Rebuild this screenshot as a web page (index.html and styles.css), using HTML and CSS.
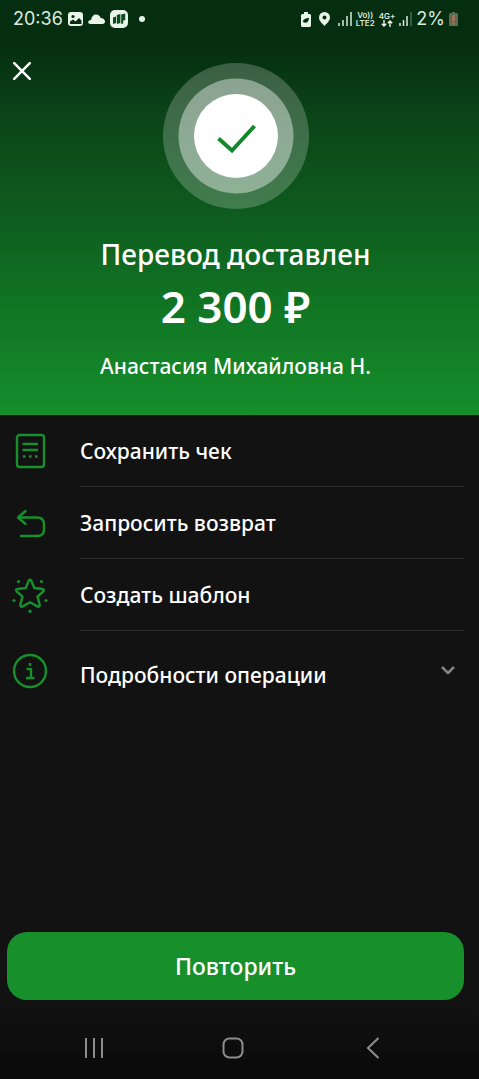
FILE: index.html
```html
<!DOCTYPE html>
<html lang="ru">
<head>
<meta charset="utf-8">
<meta name="viewport" content="width=device-width, initial-scale=1">
<title>Перевод доставлен</title>
<link rel="stylesheet" href="styles.css">
</head>
<body>
<div class="screen">
  <header class="hero">
    <div class="status">
      <div class="status-left">
        <span class="clock">20:36</span>
        <svg width="15" height="15" viewBox="0 0 15 15"><rect width="15" height="14" rx="3" fill="#eaf5ea"/><circle cx="5" cy="4.500" r="1.600" fill="#062d10"/><path d="M2 12V9.500L5 7.500l2.500 2L11 6l2.500 2.500V12z" fill="#062d10"/></svg>
        <svg class="cloud" width="17" height="11" viewBox="0 0 17 11"><path d="M2.500 10C-.8 9.500-.5 6.500 3 6 3.500 2.500 5.500.5 8 .5c2.300 0 4 1.400 4.700 3.500 2.300.2 4.300 1.500 4.300 3.500 0 1.500-1 2.500-2.500 2.500z" fill="#eaf5ea"/></svg>
        <svg width="18" height="18" viewBox="0 0 18 18"><rect width="18" height="18" rx="5" fill="#eaf5ea"/><path d="M3 7.500l3-1v6.500l-3 1zM6.800 5l3.600-1v9l-3.600 1zM11.200 4.500l4-1v6.500l-2 .5v3l-2 .5z" fill="#0b4a1c"/></svg>
        <svg class="dot" width="6" height="6" viewBox="0 0 6 6"><circle cx="3" cy="3" r="3" fill="#eaf5ea"/></svg>
      </div>
      <div class="status-right">
        <svg width="10" height="15" viewBox="0 0 10 15"><path d="M3 0h4v2h2l1 1v11l-1 1H1l-1-1V3l1-1h2z" fill="#eaf5ea"/><path d="M2 10c0-3 3-4 6-4 0 4-3 6-6 4zm0 2l4-4" fill="#062d10"/></svg>
        <svg class="pin" width="11" height="14" viewBox="0 0 11 14"><path fill-rule="evenodd" d="M5.500 0A5.500 5.500 0 0 1 11 5.500C11 9 7.500 11.500 5.500 14 3.500 11.500 0 9 0 5.500A5.500 5.500 0 0 1 5.500 0zm0 3.500a2 2 0 1 0 0 4 2 2 0 0 0 0-4z" fill="#eaf5ea"/></svg>
        <svg width="14" height="14" viewBox="0 0 14 14"><path d="M1 11v3M5 8v6M9 4v10M13 0v14" stroke="#dcebdc" stroke-width="1.500"/></svg>
        <span class="net"><span>Vo))</span><span>LTE2</span></span>
        <span class="net"><span>4G+</span><svg width="12" height="7" viewBox="0 0 12 7"><path d="M3 0v6M.8 3.800L3 6l2.200-2.200M9 7V1M6.800 3.200L9 1l2.200 2.200" fill="none" stroke="#eaf5ea" stroke-width="1.400"/></svg></span>
        <svg width="13" height="14" viewBox="0 0 13 14"><path d="M1 11v3M4.500 8v6M8 4v10" stroke="#dcebdc" stroke-width="1.500"/><path d="M12 0v14" stroke="#4a6b50" stroke-width="1.500"/></svg>
        <span class="charge">2%</span>
        <svg width="9" height="14" viewBox="0 0 9 14"><path d="M3 0h3v1h2l1 1v12H0V2l1-1h2z" fill="#5d6b52"/><path d="M4.500 3v6M4.500 10.500v2" stroke="#d8674f" stroke-width="2"/></svg>
      </div>
    </div>
    <button class="close" type="button" aria-label="Закрыть">
      <svg width="18" height="18" viewBox="0 0 18 18"><path d="M1.200 1.200l15.600 15.600M16.800 1.200L1.200 16.800" stroke="#fff" stroke-width="2.500" stroke-linecap="round"/></svg>
    </button>
    <div class="result">
      <svg width="146" height="146" viewBox="0 0 146 146"><circle cx="73" cy="73" r="73" fill="#fff" fill-opacity=".21"/><circle cx="73" cy="73" r="57.500" fill="#fff" fill-opacity=".41"/><circle cx="73" cy="73" r="42" fill="#fff"/><path d="M55.500 75.500L69 87.500 91.500 63" fill="none" stroke="#128a2b" stroke-width="4"/></svg>
      <h1 class="title">Перевод доставлен</h1>
      <p class="amount">2 300 ₽</p>
      <p class="person">Анастасия Михайловна Н.</p>
    </div>
  </header>
  <main class="actions">
    <button class="action" type="button">
      <svg class="icon" width="36" height="36" viewBox="0 0 36 36"><rect x="5" y="2" width="27" height="32" rx="2.500"/><path d="M10.500 11h15.500M10.500 17h15.500"/><path d="M11 23.500h2.600M17 23.500h2.600M23 23.500h2.600"/></svg>
      <span class="label">Сохранить чек</span>
    </button>
    <button class="action" type="button">
      <svg class="icon" width="36" height="36" viewBox="0 0 36 36"><path d="M13.500 6L6 12.500l7.500 6.500M6 12.500h19q7 0 7 7v5q0 6.500-7 6.500H9" stroke-linecap="round" stroke-linejoin="round"/></svg>
      <span class="label">Запросить возврат</span>
    </button>
    <button class="action" type="button">
      <svg class="icon" width="36" height="36" viewBox="0 0 36 36"><path d="M16.700 3.700Q18 1.800 19.300 3.700L22.300 11l8.200 1Q33 12.600 31.200 14.500L25.500 19.600l2.200 8Q27.600 30.500 25.300 29.400L18 25.200l-7.300 4.200Q8.400 30.500 8.300 27.600l2.200-8L4.800 14.500Q3 12.600 5.500 12l8.200-1z" stroke-linejoin="round"/><g fill="#17902c" stroke="none"><circle cx="6.500" cy="4.500" r="1.600"/><circle cx="29.500" cy="4.500" r="1.600"/><circle cx="2" cy="23.500" r="1.600"/><circle cx="34" cy="23.500" r="1.600"/><circle cx="18" cy="34.200" r="1.700"/></g></svg>
      <span class="label">Создать шаблон</span>
    </button>
    <button class="action action-details" type="button" aria-expanded="false">
      <svg class="icon" width="36" height="36" viewBox="0 0 36 36"><circle cx="18" cy="18" r="16"/><path d="M14.500 16H19v9M14 25h8.500M18 10v3"/></svg>
      <span class="label">Подробности операции</span>
      <svg class="chevron" width="14" height="10" viewBox="0 0 14 10"><path d="M1 1l6 6 6-6" fill="none" stroke="#858585" stroke-width="2.500"/></svg>
    </button>
  </main>
  <footer>
    <button class="repeat" type="button">Повторить</button>
    <nav class="system">
      <button type="button" aria-label="Недавние"><svg width="22" height="22" viewBox="0 0 22 22"><path d="M3 1v20M11 1v20M19 1v20"/></svg></button>
      <button type="button" aria-label="Главная"><svg width="22" height="22" viewBox="0 0 22 22"><rect x="1.500" y="1.500" width="19" height="19" rx="6"/></svg></button>
      <button type="button" aria-label="Назад"><svg width="22" height="22" viewBox="0 0 22 22"><path d="M16.500 1L6 11l10.500 10"/></svg></button>
    </nav>
  </footer>
</div>
</body>
</html>
```
FILE: styles.css
```css
* { box-sizing: border-box; }
body {
  margin: 0;
  background: #121212;
  color: #fff;
  font-family: "Noto Sans", "Open Sans", sans-serif;
}
button {
  padding: 0;
  border: 0;
  background: none;
  color: inherit;
  font: inherit;
}
svg { display: block; flex-shrink: 0; }
.screen {
  display: flex;
  flex-direction: column;
  min-height: 100vh;
}
.hero {
  padding-bottom: 33px;
  background: linear-gradient(#052d10 0, #052d10 10%, #0b4418 28%, #0e5a1e 50%, #117524 74%, #168e2c 100%);
}
.status {
  display: flex;
  justify-content: space-between;
  height: 38px;
  padding: 0 21px 0 13px;
  color: #dcebdc;
  font-family: Inter, Roboto, sans-serif;
}
.status-left, .status-right { display: flex; align-items: center; }
.status-left { gap: 5px; }
.status-right { gap: 4px; }
.clock, .charge { font-size: 18px; line-height: 24px; }
.dot { margin-left: 6px; }
.pin { margin: 0 4px; }
.net {
  display: flex;
  flex-direction: column;
  align-items: center;
  font-size: 8px;
  font-weight: 600;
  line-height: 8px;
}
.close {
  display: flex;
  align-items: center;
  height: 24px;
  margin: 21px 0 -20px 13px;
}
.result {
  display: flex;
  flex-direction: column;
  align-items: center;
  padding-right: 8px;
  text-align: center;
}
.title, .amount, .person { margin: 0; font-weight: 500; }
.title { margin-top: 25px; font-size: 28px; line-height: 40px; }
.amount { margin-top: 4px; font-size: 44px; font-weight: 600; line-height: 56px; }
.person { margin-top: 16px; font-size: 21px; line-height: 32px; }
.actions { flex: 1; padding-right: 15px; }
.action {
  display: flex;
  align-items: center;
  width: 100%;
  padding-left: 12px;
  font-size: 21px;
  font-weight: 500;
  line-height: 28px;
  text-align: left;
}
.icon {
  margin-right: 32px;
  fill: none;
  stroke: #17902c;
  stroke-width: 2.4;
}
.label {
  flex: 1;
  padding: 22px 0 21px;
  border-bottom: 1px solid #2a2a2a;
}
.action-details .label { padding: 30px 0 22px; border: 0; }
.chevron { margin-right: 9px; }
.repeat {
  display: block;
  width: calc(100% - 22px);
  height: 68px;
  margin-left: 7px;
  border-radius: 20px;
  background: #17902c;
  font-size: 23px;
  font-weight: 500;
}
.system {
  display: flex;
  justify-content: space-around;
  align-items: center;
  height: 79px;
  padding: 16px 36px 0 24px;
  background: linear-gradient(#121212, #0a0a0a);
}
.system svg { fill: none; stroke: #8e8e8e; stroke-width: 2; }
```
